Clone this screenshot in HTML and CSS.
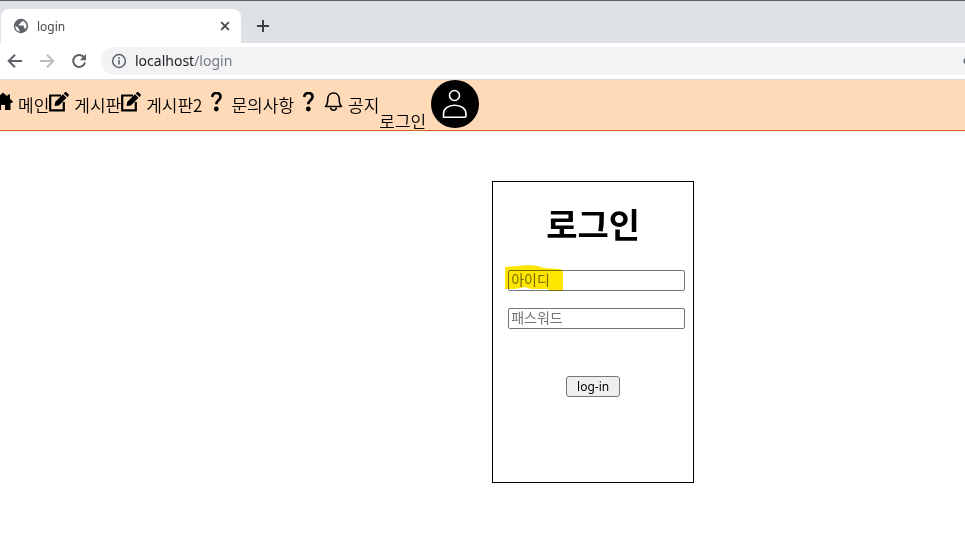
FILE: index.html
```html
<!DOCTYPE html>
<html lang="ko">
<head>
    <meta charset="UTF-8">
    <meta name="viewport" content="width=device-width, initial-scale=1.0">
    <title>login</title>
    <link rel="stylesheet" href="styles.css">
</head>
<body>

    <div class="browser">
        <div class="tabs">
            <div class="tab">
                <svg class="globe" viewBox="0 0 16 16"><circle cx="8" cy="8" r="7.2" fill="#5f6368"/><path d="M9.500 2.800c-.3 1.200-1 1.600-2.200 1.600v1.500H5.800v1.700h4c.8 0 1.100.6 1.100 1.400v1.300h1.300l.8.600A5.800 5.800 0 0 0 9.500 2.800zM2.400 7.400 5.800 10.600v1c0 .7.500 1.200 1.200 1.200v.8A5.800 5.800 0 0 1 2.400 7.400z" fill="#fff"/></svg>
                <span class="tab-title">login</span>
                <button class="icon-btn" type="button" aria-label="Close tab">
                    <svg width="16" height="16" viewBox="0 0 16 16"><path d="M4.200 4.200l7.600 7.600M11.800 4.200l-7.600 7.600" stroke="#45494d" stroke-width="1.800"/></svg>
                </button>
            </div>
            <button class="icon-btn" type="button" aria-label="New tab">
                <svg width="16" height="16" viewBox="0 0 16 16"><path d="M8 2v12M2 8h12" stroke="#3c4043" stroke-width="2"/></svg>
            </button>
        </div>
        <div class="toolbar">
            <button class="icon-btn" type="button" aria-label="Back">
                <svg width="16" height="16" viewBox="0 0 16 16"><path d="M15 8H2M8 1.700L1.700 8 8 14.300" fill="none" stroke="#5f6368" stroke-width="2"/></svg>
            </button>
            <button class="icon-btn" type="button" aria-label="Forward">
                <svg width="16" height="16" viewBox="0 0 16 16"><path d="M1 8h13M8 1.700L14.300 8 8 14.300" fill="none" stroke="#bbbdbf" stroke-width="2"/></svg>
            </button>
            <button class="icon-btn" type="button" aria-label="Reload">
                <svg width="16" height="16" viewBox="0 0 16 16"><path d="M13.300 4.700A6 6 0 1 0 14 9.500" fill="none" stroke="#5f6368" stroke-width="2"/><path d="M15 1v6.200H8.800z" fill="#5f6368"/></svg>
            </button>
            <div class="address">
                <svg width="16" height="16" viewBox="0 0 16 16"><circle cx="8" cy="8" r="6.400" fill="none" stroke="#5f6368" stroke-width="1.500"/><path d="M8 7v4.500M8 4.300v1.700" stroke="#5f6368" stroke-width="1.600"/></svg>
                <span class="url">localhost<span class="path">/login</span></span>
                <svg class="key" width="16" height="16" viewBox="0 0 16 16"><circle cx="4" cy="8" r="3.500" fill="#5f6368"/></svg>
            </div>
        </div>
    </div>

    <nav class="nav">
        <a href="#">
            <svg width="20" height="20" viewBox="0 0 20 20"><path d="M10 .5L0 9.500l1 1.500h2v7h5v-5h4v5h5.500v-7H19l1-1.500-3-2.700V2.500h-2.500v2z"/></svg>
            메인
        </a>
        <a href="#">
            <svg width="20" height="20" viewBox="0 0 20 20"><path d="M12 3.500H1.200v14.800h13.600V10" fill="none" stroke="#000" stroke-width="2.200"/><path d="M5.500 14l.8-4.200 7.600-7.600 3.600 3.600-7.600 7.600z"/><path d="M14.700 1.400l1-1c.6-.6 1.400-.5 2 0l1.800 1.800c.5.600.5 1.300 0 1.900l-1 1z"/></svg>
            게시판
        </a>
        <a href="#">
            <svg width="20" height="20" viewBox="0 0 20 20"><path d="M12 3.500H1.200v14.800h13.600V10" fill="none" stroke="#000" stroke-width="2.200"/><path d="M5.500 14l.8-4.200 7.600-7.600 3.600 3.600-7.600 7.600z"/><path d="M14.700 1.400l1-1c.6-.6 1.400-.5 2 0l1.800 1.800c.5.600.5 1.300 0 1.900l-1 1z"/></svg>
            게시판2
        </a>
        <a href="#">
            <svg width="24" height="20" viewBox="0 0 24 20"><path d="M10.200 5C10.500 2.300 12 1 14.300 1c2.500 0 4.200 1.500 4.200 3.800 0 3.400-4.200 3.500-4.200 7.500" fill="none" stroke="#000" stroke-width="2.600"/><circle cx="14.300" cy="17" r="2.400"/></svg>
            문의사항
        </a>
        <a href="#">
            <svg width="24" height="20" viewBox="0 0 24 20"><path d="M10.200 5C10.500 2.300 12 1 14.300 1c2.500 0 4.200 1.500 4.200 3.800 0 3.400-4.200 3.500-4.200 7.500" fill="none" stroke="#000" stroke-width="2.600"/><circle cx="14.300" cy="17" r="2.400"/></svg>
            <svg width="20" height="20" viewBox="0 0 20 20"><path d="M2.500 14.500c1.800-1.600 2.200-3.500 2.200-7C4.700 3.900 6.800 1 10.500 1s5.800 2.900 5.800 6.500c0 3.500.4 5.400 2.200 7z" fill="none" stroke="#000" stroke-width="1.600" stroke-linejoin="round"/><path d="M7.500 15.500c.4 3.600 5.600 3.600 6 0" fill="none" stroke="#000" stroke-width="1.600"/></svg>
            공지
        </a>
        <a class="login-link" href="#">
            <span>로그인</span>
            <svg width="48" height="48" viewBox="0 0 48 48"><circle cx="24" cy="24" r="24"/><g fill="none" stroke="#fff" stroke-width="1.600"><circle cx="23.500" cy="15.500" r="5"/><path d="M12.500 37.200V34c0-5 4.500-8.800 11.200-8.800S35 29 35 34v1.500c0 1-.7 1.700-1.700 1.700z" stroke-linejoin="round"/></g></svg>
        </a>
    </nav>

    <form class="login-box">
        <h1>로그인</h1>
        <div class="field">
            <input type="text" placeholder="아이디" aria-label="아이디">
            <svg class="marker" width="59" height="29" viewBox="0 0 59 29"><path d="M0 3l11-1 13-1 9 1 6 2 15 1c3 0 4 2 4 4v18l-11 0-5-2-16 0-6-2-10 2-10 0z" fill="#ffe600"/></svg>
        </div>
        <div class="field">
            <input type="password" placeholder="패스워드" aria-label="패스워드">
        </div>
        <button class="login-btn" type="button">log-in</button>
    </form>

</body>
</html>
```
FILE: styles.css
```css
body {
    margin: 0;
    background: white;
    font-family: "Noto Sans CJK KR", sans-serif;
    overflow-x: hidden;
}

/* Browser bar */
.browser {
    font-family: "Noto Sans", "Noto Sans CJK KR", sans-serif;
    border-bottom: 1px solid #dadce0;
}

.tabs {
    display: flex;
    align-items: center;
    gap: 14px;
    height: 34px;
    padding: 8px 0 0 1px;
    background: #dee1e6;
    border-top: 1px solid #5f6368;
}

.tab {
    display: flex;
    align-items: center;
    gap: 8px;
    box-sizing: border-box;
    width: 240px;
    height: 34px;
    padding: 0 8px 0 12px;
    background: white;
    border-radius: 8px 8px 0 0;
}

.globe {
    width: 16px;
    height: 16px;
}

.tab-title {
    flex: 1;
    font-size: 12px;
    color: #45494d;
}

.icon-btn {
    display: flex;
    padding: 0;
    border: none;
    background: none;
    cursor: pointer;
}

.toolbar {
    display: flex;
    align-items: center;
    gap: 16px;
    height: 36px;
    padding-left: 7px;
    background: white;
}

.address {
    display: flex;
    flex: 1;
    align-items: center;
    gap: 8px;
    height: 28px;
    margin-left: -2px;
    padding-left: 10px;
    background: #f1f3f4;
    border-radius: 14px 0 0 14px;
}

.url {
    flex: 1;
    font-size: 14px;
    line-height: 20px;
    padding-bottom: 1px;
    color: #202124;
}

.path {
    color: #777a7e;
}

.key {
    margin-right: -14px;
}

/* Menu */
.nav {
    display: flex;
    align-items: flex-start;
    height: 50px;
    padding-left: 13px;
    margin-left: -20px;
    background: peachpuff;
    border-bottom: 1px solid chocolate;
}

.nav a {
    display: flex;
    gap: 5px;
    padding-top: 12px;
    font-size: 17px;
    font-weight: 350;
    line-height: 25px;
    color: black;
    text-decoration: none;
    white-space: nowrap;
}

.nav .login-link {
    align-items: flex-end;
    padding-top: 0;
}

.login-link span {
    line-height: 14px;
}

/* Login form */
.login-box {
    display: flex;
    flex-direction: column;
    align-items: center;
    width: 200px;
    min-height: 300px;
    margin: 50px 0 0 51%;
    border: 1px solid black;
}

.login-box h1 {
    margin: 18px 0 22px;
    font-size: 34px;
    line-height: 48px;
}

.field {
    position: relative;
    margin: 0 0 17px 7px;
}

.field input {
    display: block;
    box-sizing: border-box;
    width: 177px;
    height: 21px;
    padding: 0 2px 3px;
    border: 1px solid #767676;
    border-radius: 2px;
    font-family: "Noto Sans CJK KR", sans-serif;
    font-size: 14px;
}

.field input::placeholder {
    color: #757575;
}

/* Yellow marker over the id field */
.marker {
    position: absolute;
    top: -6px;
    left: -3px;
    mix-blend-mode: multiply;
    pointer-events: none;
}

.login-btn {
    height: 21px;
    margin-top: 30px;
    padding: 0 10px;
    border: 1px solid #767676;
    border-radius: 3px;
    background: #efefef;
    font-family: "Noto Sans", sans-serif;
    font-size: 12px;
    line-height: 19px;
    color: black;
}
```
